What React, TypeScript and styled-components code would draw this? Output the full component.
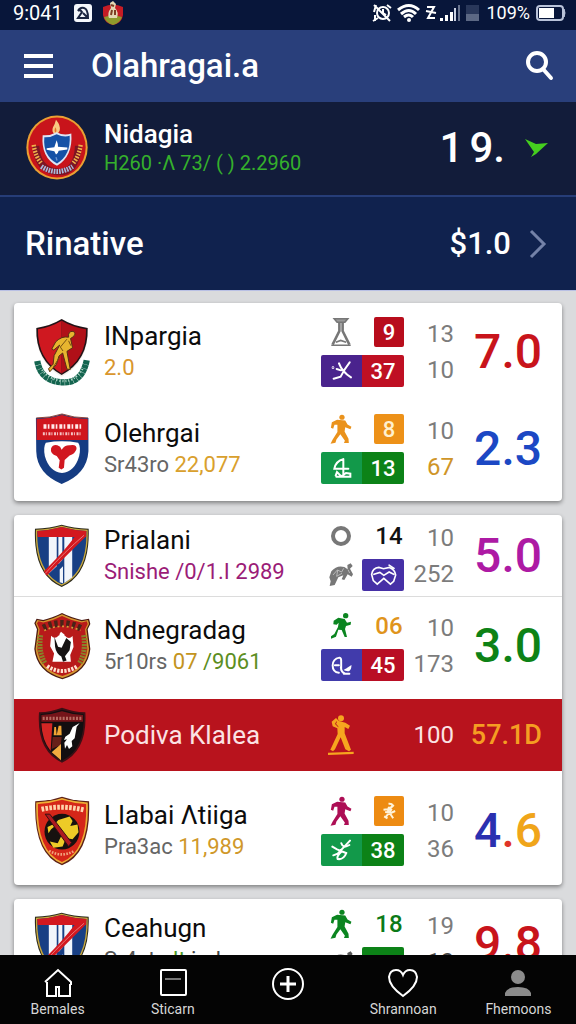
import React from "react";
import styled, { createGlobalStyle } from "styled-components";

const GlobalStyle = createGlobalStyle`
  *, *::before, *::after { box-sizing: border-box; }
  html, body, #root { height: 100%; }
  body {
    margin: 0;
    background: #dadbdd;
    font-family: Roboto, "Liberation Sans", sans-serif;
    -webkit-font-smoothing: antialiased;
  }
  button { font: inherit; color: inherit; background: none; border: 0; padding: 0; cursor: pointer; }
  ul { list-style: none; margin: 0; padding: 0; }
  h1, h2, p { margin: 0; }
  svg { display: block; flex: none; }
`;

/* ---------- layout ---------- */

const Screen = styled.div`
  display: flex;
  flex-direction: column;
  height: 100vh;
  overflow: hidden;
`;

const StatusBar = styled.div`
  display: flex;
  align-items: center;
  justify-content: space-between;
  flex: none;
  height: 30px;
  padding: 0 10px 4px 13px;
  background: #08163a;
  color: #fff;
`;

const StatusGroup = styled.div<{ $gap: number }>`
  display: flex;
  align-items: center;
  gap: ${(p) => p.$gap}px;
`;

const StatusText = styled.span<{ $size: number }>`
  font-size: ${(p) => p.$size}px;
  line-height: 26px;
`;

const AppBar = styled.header`
  display: flex;
  align-items: center;
  flex: none;
  height: 72px;
  padding: 0 22px 0 24px;
  background: #293f7b;
  color: #fff;
`;

const Title = styled.h1`
  flex: 1;
  padding-left: 38px;
  font-size: 33px;
  font-weight: 500;
  line-height: 40px;
`;

const Featured = styled.section`
  display: flex;
  align-items: center;
  flex: none;
  height: 95px;
  padding: 0 28px 2px 26px;
  background: #121c3a;
  border-bottom: 2px solid #263d78;
  color: #fff;
`;

const FeaturedText = styled.div`
  flex: 1;
  padding-left: 16px;
`;

const FeaturedName = styled.h2`
  font-size: 26px;
  font-weight: 500;
  line-height: 30px;
`;

const FeaturedNote = styled.p`
  color: #35b02c;
  font-size: 20px;
  line-height: 28px;
`;

const FeaturedValue = styled.strong`
  display: flex;
  gap: 6px;
  margin-right: 20px;
  font-size: 42px;
  font-weight: 500;
  line-height: 48px;
`;

const LinkRow = styled.a`
  display: flex;
  align-items: center;
  flex: none;
  height: 94px;
  padding: 0 29px 0 25px;
  background: #10224e;
  border-bottom: 1px solid #b9c0e4;
  color: #fff;
  font-weight: 500;
  text-decoration: none;
`;

const LinkLabel = styled.span`
  flex: 1;
  font-size: 33px;
  line-height: 40px;
`;

const LinkValue = styled.span`
  margin-right: 18px;
  font-size: 31px;
  line-height: 40px;
`;

const List = styled.main`
  flex: 1;
  min-height: 0;
  display: flex;
  flex-direction: column;
  gap: 14px;
  padding: 12px 14px;
  overflow-y: auto;
  scrollbar-width: none;
  background: #dadbdd;
`;

const Card = styled.ul`
  flex: none;
  background: #fff;
  border-radius: 4px;
  box-shadow: 0 2px 4px rgba(0, 0, 0, 0.42);
`;

const Row = styled.li<{ $height: number; $top?: number; $bottom?: number; $divided?: boolean; $active?: boolean }>`
  display: grid;
  grid-template-columns: 56px minmax(0, 1fr) 83px 50px 88px;
  align-items: center;
  min-height: ${(p) => p.$height}px;
  padding: ${(p) => p.$top ?? 0}px 20px ${(p) => p.$bottom ?? 0}px;
  border-bottom: ${(p) => (p.$divided ? "1px solid #dcdcdc" : "0")};
  background: ${(p) => (p.$active ? "#b8131d" : "transparent")};
  color: ${(p) => (p.$active ? "#fbe3e4" : "#0c0c0c")};
`;

const CrestCell = styled.div`
  display: flex;
  justify-content: center;
`;

const Team = styled.div`
  padding-left: 14px;
  white-space: nowrap;
`;

const TeamName = styled.h2`
  font-size: 26px;
  font-weight: 400;
  line-height: 32px;
`;

const TeamNote = styled.p`
  font-size: 22px;
  line-height: 32px;
`;

const Tint = styled.span<{ $color: string }>`
  color: ${(p) => p.$color};
`;

const Stats = styled.div`
  display: flex;
  flex-direction: column;
  gap: 8px;
`;

const StatLine = styled.div<{ $height: number }>`
  display: flex;
  justify-content: space-between;
  height: ${(p) => p.$height}px;
`;

const IconSlot = styled.span`
  display: flex;
  align-items: center;
  justify-content: center;
  width: 40px;
`;

const Badge = styled.span<{ $bg?: string; $fg?: string; $wide?: boolean }>`
  display: flex;
  align-items: center;
  justify-content: center;
  width: ${(p) => (p.$wide ? 42 : 30)}px;
  border-radius: 2px;
  background: ${(p) => p.$bg ?? "transparent"};
  color: ${(p) => p.$fg ?? "#fff"};
  font-size: ${(p) => (p.$bg ? 22 : 24)}px;
  font-weight: 500;
`;

const SplitBadge = styled.span<{ $left: string; $right: string }>`
  display: grid;
  grid-template-columns: 41px 42px;
  align-items: center;
  justify-items: center;
  border-radius: 2px;
  background: linear-gradient(90deg, ${(p) => p.$left} 41px, ${(p) => p.$right} 41px);
  color: #fff;
  font-size: 22px;
  font-weight: 500;
`;

const Numbers = styled.div<{ $active?: boolean }>`
  display: flex;
  flex-direction: column;
  align-items: flex-end;
  color: ${(p) => (p.$active ? "#fbe3e4" : "#7c7c7c")};
  font-size: 24px;
  font-weight: 400;
  line-height: 36px;
`;

const Score = styled.strong<{ $color: string; $small?: boolean }>`
  justify-self: end;
  color: ${(p) => p.$color};
  font-size: ${(p) => (p.$small ? 27 : 48)}px;
  font-weight: 500;
  line-height: 56px;
  white-space: nowrap;
`;

const Nav = styled.nav`
  display: flex;
  flex: none;
  height: 69px;
  background: #040404;
`;

const NavButton = styled.button`
  display: flex;
  flex: 1;
  flex-direction: column;
  align-items: center;
  padding-top: 12px;
  color: #fff;
  font-size: 14px;
  line-height: 20px;
`;

const NavLabel = styled.span`
  color: #d6d6d6;
`;

const NavGlyph = styled.span`
  display: flex;
  align-items: center;
  justify-content: center;
  height: 32px;
`;

/* ---------- crests ---------- */

const RoundCrest = () => (
  <svg width="62" height="65" viewBox="78 46 186 194" aria-hidden="true">
    <ellipse cx="171" cy="143" rx="92" ry="96" fill="#e9a033" />
    <ellipse cx="171" cy="143" rx="86" ry="90" fill="#c8141b" />
    <path d="M108 138Q112 210 171 216T235 138" fill="none" stroke="#7c1524" strokeWidth="20" />
    <path d="M101 135Q106 170 125 192" fill="none" stroke="#f0b04a" strokeWidth="13" strokeDasharray="5 4" />
    <path d="M242 135Q237 170 218 192" fill="none" stroke="#f0b04a" strokeWidth="13" strokeDasharray="5 4" />
    <path d="M124 200Q171 230 218 200" fill="none" stroke="#a9b9dc" strokeWidth="15" strokeDasharray="5 3" />
    <path d="M168 60Q183 78 179 92Q175 103 165 103Q153 96 159 82Q165 73 168 60Z" fill="#f9c982" />
    <path d="M166 82Q172 91 167 99Q161 93 166 82Z" fill="#e4732a" />
    <path d="M128 106Q150 108 170 97Q190 108 214 101Q219 170 171 198Q122 172 128 106Z" fill="#dde5f5" />
    <path d="M133 112Q153 113 170 103Q190 113 209 108Q213 166 171 191Q128 167 133 112Z" fill="#1551a6" />
    <path d="M170 121Q175 134 174 141L202 143L202 149L176 153Q174 162 168 164L163 154L140 150L140 145L163 142Z" fill="#fff" />
    <path d="M168 172l3 10" stroke="#6c95d2" strokeWidth="4" />
  </svg>
);

const RunnerCrest = () => (
  <svg width="56" height="70" viewBox="100 72 170 212" aria-hidden="true">
    <path d="M110 205Q120 265 183 270T260 203" fill="none" stroke="#13654f" strokeWidth="19" strokeDasharray="12 1" />
    <path d="M125 232Q145 260 183 266T248 228" fill="none" stroke="#bfe0d2" strokeWidth="7" strokeDasharray="3 6" />
    <path d="M107 105Q150 99 184 78Q218 99 263 105Q268 208 184 253Q102 208 107 105Z" fill="#f3eee8" />
    <path d="M107 105Q150 99 184 78Q218 99 263 105Q266 203 184 248Q104 203 107 105Z" fill="#221318" />
    <path d="M112 109Q152 102 184 83V243Q110 200 112 109Z" fill="#cf1820" />
    <path d="M184 83Q216 102 258 109Q260 200 184 243Z" fill="#b01018" />
    <path d="M205 124Q209 113 221 116Q229 123 220 131L211 137L217 165L200 176L210 231L200 230L187 181L176 190L168 216L148 238L144 229L158 215L161 189L178 157L160 172L154 169L166 147Q184 129 205 133Z" fill="#e7b52f" stroke="#553014" strokeWidth="3" />
    <path d="M200 139L180 163L188 175M178 193L158 225M205 144L212 159" fill="none" stroke="#765012" strokeWidth="3" />
  </svg>
);

const HeartCrest = () => (
  <svg width="56" height="72" viewBox="100 364 168 218" aria-hidden="true">
    <path d="M105 379Q150 379 184 367Q218 379 264 379V480Q260 549 183 579Q108 548 106 480Z" fill="#153c82" />
    <path d="M107 382Q150 381 184 370Q218 381 262 382V446H107Z" fill="#d0161d" />
    <path d="M106 379Q150 379 184 367Q218 379 263 379" fill="none" stroke="#8c4439" strokeWidth="3" />
    <path d="M128 405H243" stroke="#ffe9e9" strokeWidth="14" strokeDasharray="9 4 5 6" />
    <path d="M126 427H243" stroke="#f5c3c3" strokeWidth="9" strokeDasharray="6 3 3 5" />
    <path d="M135 454Q184 445 233 454Q242 466 236 494Q223 541 184 546Q145 541 132 494Q127 466 135 454Z" fill="#fff" />
    <path d="M183 475Q192 461 208 462Q229 458 228 473Q223 488 207 493L192 506L190 530L182 535L174 530L177 507L168 494Q147 488 151 471Q157 458 170 462Q180 465 183 475Z" fill="#d11720" />
  </svg>
);

const StripeCrest = () => (
  <svg width="56" height="64" viewBox="100 56 170 194" aria-hidden="true">
    <path d="M103 70Q149 68 184 58Q219 68 266 70Q271 210 184 247Q97 210 103 70Z" fill="#2c2a1c" />
    <path d="M106 73Q149 71 184 61Q219 71 263 73Q267 207 184 243Q101 207 106 73Z" fill="#c9a93d" />
    <path d="M110 77Q149 75 184 65Q219 75 259 77Q262 203 184 239Q107 203 110 77Z" fill="#183f84" />
    <path d="M110 77Q149 75 184 65Q219 75 259 77L258 95H111Z" fill="#d3181f" />
    <path d="M145 95H169V184L145 206ZM174 95H186V165L174 178ZM192 95H216V218L192 235ZM178 194L188 184V236L178 233Z" fill="#f1f5fb" />
    <path d="M240 82L259 92Q205 145 138 213L130 199Q187 144 222 97Z" fill="#d3181f" />
    <path d="M252 90Q196 137 134 206" fill="none" stroke="#f3a7a7" strokeWidth="2" />
  </svg>
);

const RoosterCrest = () => (
  <svg width="58" height="68" viewBox="96 318 176 206" aria-hidden="true">
    <path d="M107 338L127 342Q153 337 184 321Q216 337 244 342L266 338L270 354L262 370L270 430Q263 499 185 522Q107 499 100 430L108 370L100 352Z" fill="#4b1a12" />
    <path d="M109 342L127 346Q155 340 184 325Q214 340 244 346L263 342L266 354L258 370L266 430Q259 496 185 518Q111 496 104 430L112 370L104 352Z" fill="#d5962f" />
    <path d="M113 346L127 350Q157 344 184 330Q212 344 244 350L259 346L262 354L254 370L261 430Q254 491 185 512Q116 491 109 430L116 370L108 352Z" fill="#b81a1a" />
    <path d="M119 388Q111 437 132 474M250 388Q258 437 237 474" fill="none" stroke="#89812a" strokeWidth="16" strokeDasharray="6 3" />
    <path d="M127 366Q184 337 243 368" fill="none" stroke="#492418" strokeWidth="20" strokeDasharray="10 8" />
    <path d="M130 374Q184 349 240 374" fill="none" stroke="#d99839" strokeWidth="5" strokeDasharray="6 8" />
    <path d="M151 390Q162 403 174 389Q185 382 193 390Q205 403 216 391L219 424L209 448L211 469H155L160 444L148 422Z" fill="#fff" />
    <path d="M161 394L172 423L183 426L197 397L211 409L207 434L193 452L198 465L187 469L182 453Q166 443 163 423Z" fill="#161313" />
    <path d="M176 385L181 378L192 387L184 402Z" fill="#fff" />
    <path d="M139 482Q185 512 231 482" fill="none" stroke="#ffe1d0" strokeWidth="12" strokeDasharray="7 4" />
  </svg>
);

const HornCrest = () => (
  <svg width="50" height="56" viewBox="110 52 148 168" aria-hidden="true">
    <path d="M115 68Q152 66 184 54Q217 66 254 68Q261 184 184 219Q107 184 115 68Z" fill="#3b1015" />
    <path d="M120 73Q153 71 184 60Q215 71 249 73Q254 179 184 213Q114 179 120 73Z" fill="#120e10" />
    <path d="M122 76Q153 75 184 65Q215 75 247 76V96H122Z" fill="#751419" />
    <path d="M126 86H244" stroke="#b56a60" strokeWidth="10" strokeDasharray="6 4" />
    <path d="M122 101H155L150 184Q124 153 122 101Z" fill="#d32624" />
    <path d="M161 112H166L168 136L174 108H182L183 137H159Z" fill="#f0a333" />
    <path d="M156 142H183L180 166L153 178Z" fill="#672019" />
    <path d="M181 163V212L153 188Z" fill="#f2aa3f" />
    <path d="M237 100L228 111L222 146L213 154L215 170L205 178L199 166L193 177L191 159L199 149L190 151L194 141L207 132L216 112Z" fill="#fff" />
  </svg>
);

const BallCrest = () => (
  <svg width="56" height="70" viewBox="100 318 168 212" aria-hidden="true">
    <path d="M103 334Q148 333 184 320Q220 333 266 334Q273 494 184 528Q97 494 103 334Z" fill="#5e2117" />
    <path d="M106 338Q148 336 184 324Q220 336 262 338Q268 489 184 523Q101 489 106 338Z" fill="#efad35" />
    <path d="M111 342Q149 340 184 329Q219 340 257 342Q262 485 184 518Q107 485 111 342Z" fill="#d52619" />
    <path d="M122 358Q184 345 250 360" fill="none" stroke="#ffd3ab" strokeWidth="15" strokeDasharray="8 4" />
    <ellipse cx="184" cy="426" rx="53" ry="54" fill="#17110f" />
    <path d="M173 391L207 380L216 394L209 409L231 404L234 428L216 449L196 445L186 471L158 475L147 456L171 461L183 437L165 407L151 419L143 431L140 412L163 401Z" fill="#edcb27" />
    <path d="M133 373L147 373L213 459L204 471Z" fill="#ad1920" stroke="#321012" strokeWidth="3" />
    <path d="M145 484Q184 506 221 484" fill="none" stroke="#f2a27c" strokeWidth="8" strokeDasharray="5 4" />
  </svg>
);

/* ---------- small icons ---------- */

const Walker = ({ color }: { color: string }) => (
  <svg width="24" height="30" viewBox="88 366 72 92" fill={color} aria-hidden="true">
    <circle cx="127" cy="376" r="8" />
    <path d="M112 384L137 386L144 398L156 405L153 413L137 407L135 420L147 442L148 455H133L136 448L122 428L110 444L107 454L92 457L98 445L113 421L113 399L104 399L100 411L93 408L96 391Z" />
  </svg>
);

const Runner = ({ color }: { color: string }) => (
  <svg width="22" height="28" viewBox="88 316 66 84" fill={color} aria-hidden="true">
    <circle cx="135" cy="327" r="8" />
    <path d="M113 333L132 337L139 348L151 345L150 354L136 358L133 367L139 391H132L123 370L113 369L106 390L91 396V389L101 382L112 361L114 348L108 354L98 353L99 342Z" />
  </svg>
);

const Stand = () => (
  <svg width="22" height="32" viewBox="88 74 68 94" fill="none" stroke="#777" aria-hidden="true">
    <path d="M101 80H143L134 91H110Z" fill="#999" strokeWidth="5" />
    <path d="M117 92V118L96 160M127 92V118L148 160" strokeWidth="8" />
    <path d="M92 162H152M106 153L121 147L138 153" strokeWidth="5" />
  </svg>
);

const Ring = () => (
  <svg width="20" height="20" viewBox="0 0 20 20" aria-hidden="true">
    <circle cx="10" cy="10" r="8" fill="none" stroke="#777" strokeWidth="4" />
  </svg>
);

const Turtle = ({ color = "#777" }: { color?: string }) => (
  <svg width="26" height="24" viewBox="78 158 78 72" aria-hidden="true">
    <path d="M86 213L82 201L88 183Q105 163 127 170L137 177L136 164L146 159L152 167L144 175L153 192L149 199L137 192L127 209L119 207L124 195L109 201L98 224L83 227Z" fill={color} />
    <path d="M93 194L106 179L119 185L125 174M107 180L104 198L120 189M138 178L143 188" fill="none" stroke="#d8d8d8" strokeWidth="2" />
  </svg>
);

const Fighter = () => (
  <svg width="28" height="42" viewBox="79 68 84 126" aria-hidden="true">
    <g fill="#f6a51f">
      <circle cx="121" cy="81" r="9" />
      <path d="M106 80L115 89L134 94L148 103L143 113L132 107L132 126L151 175L145 180L134 174L120 138L103 174L97 180L89 175L111 128L110 111L96 105L93 91Z" />
      <path d="M82 184L159 181V188L82 191Z" />
    </g>
    <path d="M109 91Q99 97 113 106" fill="none" stroke="#b8131d" strokeWidth="3" />
  </svg>
);

const glyphProps = { fill: "none", stroke: "#fff", strokeWidth: 6, strokeLinecap: "round" as const, "aria-hidden": true };

const CrossGlyph = () => (
  <svg width="22" height="20" viewBox="88 214 66 60" {...glyphProps}>
    <path d="M112 221Q121 246 148 263M144 218Q129 237 117 261L96 267M118 242L105 238" />
    <circle cx="94" cy="234" r="1" />
  </svg>
);

const SailGlyph = () => (
  <svg width="20" height="22" viewBox="90 500 60 66" {...glyphProps}>
    <path d="M124 506V559M124 507Q102 512 97 535H139M101 556L105 545L118 558L132 548L145 550V559H103" />
  </svg>
);

const MaskGlyph = () => (
  <svg width="27" height="22" viewBox="208 168 82 66" {...glyphProps} strokeWidth={5}>
    <path d="M213 199Q216 180 235 178L249 182L267 178Q284 185 286 201L280 220L270 229L250 211L230 229L218 218ZM220 199L238 193L250 202L266 192L280 199M266 171L281 181" />
  </svg>
);

const MoonGlyph = () => (
  <svg width="21" height="21" viewBox="89 446 64 62" {...glyphProps}>
    <path d="M115 453Q94 457 94 477Q94 497 113 499M115 453Q121 454 120 466V491M101 476H113M119 482Q120 498 131 501M128 502H145M134 490Q147 495 148 481L139 487Z" />
  </svg>
);

const RacketGlyph = () => (
  <svg width="22" height="22" viewBox="88 448 66 66" {...glyphProps}>
    <path d="M145 453L108 492L95 497M92 471L106 479L133 490M119 461Q124 478 143 466M119 486Q104 500 108 508Q126 511 134 490" />
  </svg>
);

const BugGlyph = () => (
  <svg width="15" height="18" viewBox="240 334 44 54" fill="none" stroke="#fff3d9" strokeWidth="6" aria-hidden="true">
    <path d="M259 339Q272 338 270 347Q264 354 257 350M244 357L262 355L275 343M249 364L268 366L279 361M269 355L250 380M257 358L273 383M246 377L256 383" />
  </svg>
);

/* ---------- status and bar icons ---------- */

const AppTile = () => (
  <svg width="18" height="18" viewBox="0 0 18 18" aria-hidden="true">
    <rect width="18" height="18" rx="3" fill="#f4f7fc" />
    <path d="M4 7Q6 3 10 4Q14 5 14 14H4L8 8Q6 5 4 7M9 9L13 13" fill="none" stroke="#1b2541" strokeWidth="2" />
  </svg>
);

const MiniCrest = () => (
  <svg width="20" height="25" viewBox="0 0 20 25" aria-hidden="true">
    <path d="M0 6Q10 1 20 6V14Q19 22 10 24Q1 22 0 14Z" fill="#c51c25" />
    <path d="M1 16Q10 13 19 16Q17 22 10 24Q3 22 1 16Z" fill="#8e9a2c" />
    <path d="M7 2L10 0L13 3L12 7Q16 11 14 17H6Q4 12 8 7Z" fill="#e4d7b4" />
    <path d="M8 4L11 5M9 9L8 14M12 9V14" stroke="#7c3d22" strokeWidth="2" />
  </svg>
);

const StatusIcons = () => (
  <svg width="108" height="22" viewBox="0 0 108 22" aria-hidden="true">
    <g fill="none" stroke="#fff" strokeWidth="2">
      <circle cx="11" cy="11" r="6" />
      <path d="M2 3L18 19M2 10L4 3M1 19L6 16M15 3L19 6M11 7V11L14 13M3 13V19" />
      <path d="M26 8Q37 -1 47 8M29 12Q37 5 44 12M32 15Q37 11 41 15" strokeWidth="3" />
      <path d="M55 5H62L56 16H63M54 9L64 11" />
    </g>
    <circle cx="37" cy="18" r="2" fill="#fff" />
    <path d="M68 16h3v3h-3zM73 13h3v6h-3zM78 10h3v9h-3z" fill="#fff" />
    <path d="M82 6h2v13h-2z" fill="#c9d0e1" />
    <path d="M86 3h2v16h-2z" fill="#69748f" />
    <path d="M94 3h13v16H94z" fill="#29375a" />
    <path d="M94 12h13v7H94z" fill="#5c6884" />
  </svg>
);

const Battery = () => (
  <svg width="30" height="18" viewBox="0 0 30 18" aria-hidden="true">
    <rect x="1" y="2" width="26" height="14" rx="3" fill="none" stroke="#b9c3d9" strokeWidth="2" />
    <path d="M3 4h15v10H3z" fill="#fff" />
    <path d="M28 5Q30 9 28 13Z" fill="#b9c3d9" stroke="#b9c3d9" />
  </svg>
);

const MenuIcon = () => (
  <svg width="29" height="24" viewBox="0 0 29 24" aria-hidden="true">
    <path d="M0 2H29M0 12H29M0 22H29" stroke="#fff" strokeWidth="4" />
  </svg>
);

const SearchIcon = () => (
  <svg width="28" height="30" viewBox="0 0 28 30" fill="none" stroke="#fff" aria-hidden="true">
    <circle cx="11" cy="11" r="9" strokeWidth="4" />
    <path d="M17 18L25 27" strokeWidth="4" strokeLinecap="round" />
  </svg>
);

const TrendArrow = () => (
  <svg width="23" height="18" viewBox="0 0 23 18" aria-hidden="true">
    <path d="M0 0L11 5L23 4L11 15L6 18L9 13Z" fill="#45cf1f" />
  </svg>
);

const Chevron = () => (
  <svg width="18" height="30" viewBox="0 0 18 30" aria-hidden="true">
    <path d="M2 2L15 15L2 28" fill="none" stroke="#7482a8" strokeWidth="3" />
  </svg>
);

const HomeIcon = () => (
  <svg width="30" height="30" viewBox="0 0 30 30" fill="none" stroke="#fff" strokeWidth="2" aria-hidden="true">
    <path d="M2 14L15 2L28 14V17M4 14V28H13V19H16V28H27V16" />
  </svg>
);

const BoxIcon = () => (
  <svg width="28" height="28" viewBox="0 0 28 28" fill="none" stroke="#fff" strokeWidth="2" aria-hidden="true">
    <rect x="2" y="1" width="25" height="25" rx="1" />
    <path d="M6 10H22" stroke="#777" />
  </svg>
);

const PlusIcon = () => (
  <svg width="34" height="34" viewBox="0 0 34 34" fill="none" stroke="#fff" strokeWidth="2" aria-hidden="true">
    <circle cx="17" cy="18" r="15" />
    <path d="M17 10V26M9 18H25" strokeWidth="3" />
  </svg>
);

const HeartIcon = () => (
  <svg width="30" height="30" viewBox="0 0 30 30" fill="none" stroke="#fff" strokeWidth="2" aria-hidden="true">
    <path d="M15 28Q1 18 1 9Q2 2 8 2Q13 2 15 7Q17 2 22 2Q28 2 29 9Q29 18 15 28Z" />
  </svg>
);

const PersonIcon = () => (
  <svg width="28" height="28" viewBox="0 0 28 28" fill="#8b8b8b" aria-hidden="true">
    <circle cx="14" cy="8" r="7" />
    <path d="M1 27V24Q3 18 14 18T27 24V27Z" />
  </svg>
);

/* ---------- data ---------- */

interface TeamRow {
  name: string;
  note?: { text: string; color: string }[];
  crest: React.ReactNode;
  height: number;
  top?: number;
  bottom?: number;
  divided?: boolean;
  active?: boolean;
  icon: React.ReactNode;
  badge?: { value: React.ReactNode; bg?: string; fg?: string };
  split?: { icon: React.ReactNode; value: string; left: string; right: string };
  pair?: { icon: React.ReactNode; value: React.ReactNode; bg: string };
  numbers: { value: string; color?: string }[];
  score: { text: string; color: string }[];
}

const cards: TeamRow[][] = [
  [
    {
      name: "INpargia",
      note: [{ text: "2.0", color: "#d9962d" }],
      crest: <RunnerCrest />,
      height: 98,
      icon: <Stand />,
      badge: { value: "9", bg: "#b80d1c" },
      split: { icon: <CrossGlyph />, value: "37", left: "#4a238d", right: "#bf1023" },
      numbers: [{ value: "13" }, { value: "10" }],
      score: [{ text: "7.0", color: "#c8141b" }],
    },
    {
      name: "Olehrgai",
      note: [{ text: "Sr43ro ", color: "#666" }, { text: "22,077", color: "#d9a02d" }],
      crest: <HeartCrest />,
      height: 100,
      bottom: 4,
      icon: <Walker color="#ea921c" />,
      badge: { value: "8", bg: "#ed9118", fg: "#fff0cf" },
      split: { icon: <SailGlyph />, value: "13", left: "#12994a", right: "#0c8217" },
      numbers: [{ value: "10" }, { value: "67", color: "#cf9528" }],
      score: [{ text: "2.3", color: "#1c48c4" }],
    },
  ],
  [
    {
      name: "Prialani",
      note: [{ text: "Snishe /0/1.I 2989", color: "#9b1c77" }],
      crest: <StripeCrest />,
      height: 82,
      divided: true,
      icon: <Ring />,
      badge: { value: "14", fg: "#111" },
      pair: { icon: <Turtle />, value: <MaskGlyph />, bg: "#4630a6" },
      numbers: [{ value: "10" }, { value: "252" }],
      score: [{ text: "5.0", color: "#ad1aa4" }],
    },
    {
      name: "Ndnegradag",
      note: [
        { text: "5r10rs ", color: "#666" },
        { text: "07", color: "#c39420" },
        { text: " /9061", color: "#5c8e22" },
      ],
      crest: <RoosterCrest />,
      height: 102,
      bottom: 4,
      icon: <Runner color="#0b8520" />,
      badge: { value: "06", fg: "#e0941c" },
      split: { icon: <MoonGlyph />, value: "45", left: "#413bab", right: "#b90e24" },
      numbers: [{ value: "10" }, { value: "173" }],
      score: [{ text: "3.0", color: "#0d8216" }],
    },
    {
      name: "Podiva Klalea",
      crest: <HornCrest />,
      height: 72,
      active: true,
      icon: <Fighter />,
      numbers: [{ value: "100" }],
      score: [{ text: "57.1D", color: "#f59d22" }],
    },
    {
      name: "LIabai Λtiiga",
      note: [{ text: "Pra3ac ", color: "#666" }, { text: "11,989", color: "#d0982a" }],
      crest: <BallCrest />,
      height: 114,
      top: 6,
      icon: <Walker color="#ad0e55" />,
      badge: { value: <BugGlyph />, bg: "#ed8b12" },
      split: { icon: <RacketGlyph />, value: "38", left: "#12994a", right: "#0c8217" },
      numbers: [{ value: "10" }, { value: "36" }],
      score: [
        { text: "4", color: "#2a30b0" },
        { text: ".", color: "#e03428" },
        { text: "6", color: "#f0a51a" },
      ],
    },
  ],
  [
    {
      name: "Ceahugn",
      note: [{ text: "Sr4stn ", color: "#555" }, { text: "lt", color: "#4d9a22" }, { text: " ind", color: "#444" }],
      crest: <StripeCrest />,
      height: 90,
      icon: <Walker color="#0b8520" />,
      badge: { value: "18", fg: "#0c7a17" },
      pair: { icon: <Turtle color="#555" />, value: "28", bg: "#0c8217" },
      numbers: [{ value: "19" }, { value: "10", color: "#444" }],
      score: [{ text: "9.8", color: "#c8141b" }],
    },
  ],
];

const navItems = [
  { label: "Bemales", icon: <HomeIcon /> },
  { label: "Sticarn", icon: <BoxIcon /> },
  { label: "", aria: "Add", icon: <PlusIcon /> },
  { label: "Shrannoan", icon: <HeartIcon /> },
  { label: "Fhemoons", icon: <PersonIcon /> },
];

const TeamItem = ({ row }: { row: TeamRow }) => (
  <Row $height={row.height} $top={row.top} $bottom={row.bottom} $divided={row.divided} $active={row.active}>
    <CrestCell>{row.crest}</CrestCell>
    <Team>
      <TeamName>{row.name}</TeamName>
      {row.note && (
        <TeamNote>
          {row.note.map((part) => (
            <Tint key={part.text} $color={part.color}>{part.text}</Tint>
          ))}
        </TeamNote>
      )}
    </Team>
    <Stats>
      <StatLine $height={row.active ? 44 : 30}>
        <IconSlot>{row.icon}</IconSlot>
        {row.badge && <Badge $bg={row.badge.bg} $fg={row.badge.fg}>{row.badge.value}</Badge>}
      </StatLine>
      {row.split && (
        <StatLine $height={32}>
          <SplitBadge $left={row.split.left} $right={row.split.right}>
            {row.split.icon}
            <span>{row.split.value}</span>
          </SplitBadge>
        </StatLine>
      )}
      {row.pair && (
        <StatLine $height={32}>
          <IconSlot>{row.pair.icon}</IconSlot>
          <Badge $wide $bg={row.pair.bg}>{row.pair.value}</Badge>
        </StatLine>
      )}
    </Stats>
    <Numbers $active={row.active}>
      {row.numbers.map((n, i) => (
        <Tint key={i} $color={n.color ?? "inherit"}>{n.value}</Tint>
      ))}
    </Numbers>
    <Score $color={row.score[0].color} $small={row.active}>
      {row.score.map((part) => (
        <Tint key={part.text} $color={part.color}>{part.text}</Tint>
      ))}
    </Score>
  </Row>
);

export default function App() {
  return (
    <Screen>
      <GlobalStyle />
      <StatusBar>
        <StatusGroup $gap={11}>
          <StatusText $size={20}>9:041</StatusText>
          <AppTile />
          <MiniCrest />
        </StatusGroup>
        <StatusGroup $gap={6}>
          <StatusIcons />
          <StatusText $size={18}>109%</StatusText>
          <Battery />
        </StatusGroup>
      </StatusBar>
      <AppBar>
        <button type="button" aria-label="Menu"><MenuIcon /></button>
        <Title>Olahragai.a</Title>
        <button type="button" aria-label="Search"><SearchIcon /></button>
      </AppBar>
      <Featured>
        <RoundCrest />
        <FeaturedText>
          <FeaturedName>Nidagia</FeaturedName>
          <FeaturedNote>H260 ·Λ 73/ ( ) 2.2960</FeaturedNote>
        </FeaturedText>
        <FeaturedValue><span>1</span><span>9.</span></FeaturedValue>
        <TrendArrow />
      </Featured>
      <LinkRow href="#rinative">
        <LinkLabel>Rinative</LinkLabel>
        <LinkValue>$1.0</LinkValue>
        <Chevron />
      </LinkRow>
      <List>
        {cards.map((rows, i) => (
          <Card key={i}>
            {rows.map((row) => (
              <TeamItem key={row.name} row={row} />
            ))}
          </Card>
        ))}
      </List>
      <Nav>
        {navItems.map((item) => (
          <NavButton key={item.label} type="button" aria-label={item.aria}>
            <NavGlyph>{item.icon}</NavGlyph>
            {item.label && <NavLabel>{item.label}</NavLabel>}
          </NavButton>
        ))}
      </Nav>
    </Screen>
  );
}
